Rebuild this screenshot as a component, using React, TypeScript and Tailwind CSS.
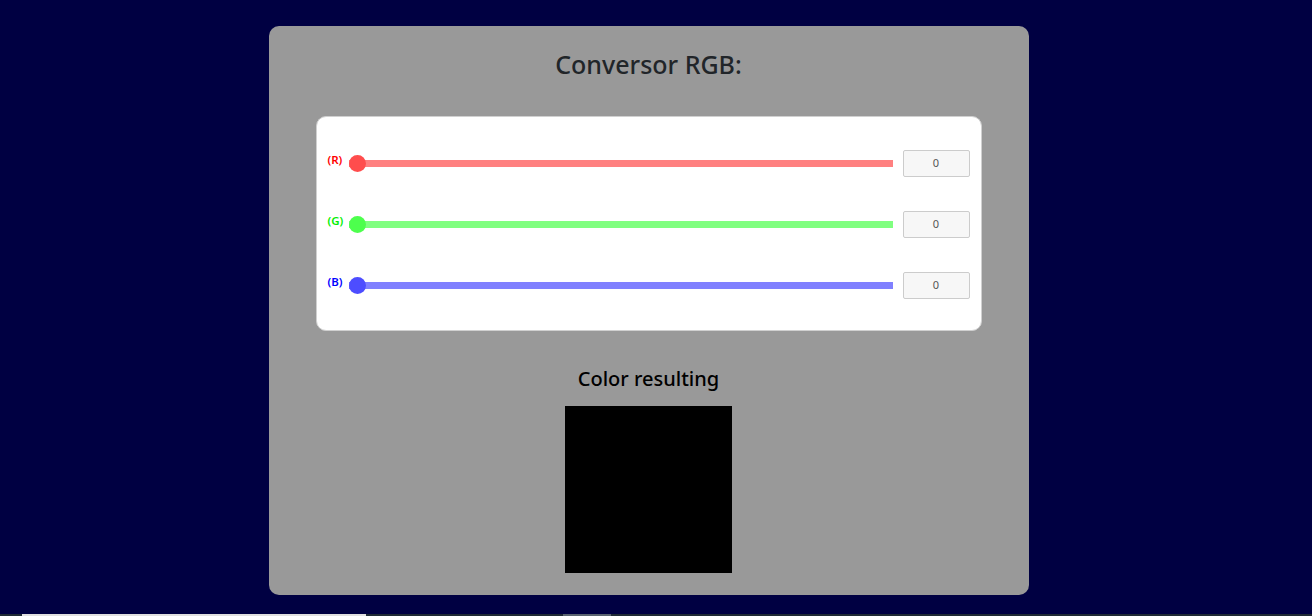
import React from "react";

const rows = [
  { label: "(R)", labelColor: "text-[#ff0000]", track: "bg-[#ff8080]", thumb: "bg-[#ff4d4d]" },
  { label: "(G)", labelColor: "text-[#00ee00]", track: "bg-[#80ff80]", thumb: "bg-[#4dff4d]" },
  { label: "(B)", labelColor: "text-[#0000ff]", track: "bg-[#8080ff]", thumb: "bg-[#4d4dff]" },
];

export default function App() {
  return (
    <div className="w-[1312px] h-[616px] flex flex-col bg-[#000042]" style={{ fontFamily: '"Noto Sans", "Open Sans", sans-serif' }}>
      <div className="h-[614px] flex justify-center pr-[15px] pt-[26px]">
        <div className="w-[760px] h-[569px] bg-[#999999] rounded-[10px] flex flex-col items-center">
          <h1 className="mt-[22px] text-[25px] leading-[32px] font-medium text-[#212529]">Conversor RGB:</h1>
          <div className="mt-[36px] w-[666px] h-[215px] bg-white rounded-[10px] border border-[#d0d0d0] px-[11px] py-[33px] flex flex-col gap-[34px]">
            {rows.map((r) => (
              <div key={r.label} className="h-[27px] flex items-center">
                <div className={`w-[21px] text-[11.5px] leading-[12px] font-semibold -mt-[8px] ${r.labelColor}`}>{r.label}</div>
                <div className="relative w-[544px] h-[7px] flex items-center">
                  <div className={`w-full h-[7px] ${r.track}`} />
                  <div className={`absolute left-0 w-[17px] h-[17px] rounded-full ${r.thumb}`} />
                </div>
                <div className="ml-[10px] w-[67px] h-[27px] bg-[#f7f7f7] border border-[#cccccc] rounded-[2px] flex items-center justify-center text-[11px] text-[#555555]">
                  0
                </div>
              </div>
            ))}
          </div>
          <h2 className="mt-[35px] text-[20px] leading-[26px] font-medium text-black">Color resulting</h2>
          <div className="mt-[14px] w-[167px] h-[167px] bg-black" />
        </div>
      </div>
      <div className="h-[2px] flex bg-[#1f2a35]">
        <div className="w-[22px]" />
        <div className="w-[344px] bg-[#e0e0e0]" />
        <div className="w-[197px]" />
        <div className="w-[48px] bg-[#5a6470]" />
      </div>
    </div>
  );
}
